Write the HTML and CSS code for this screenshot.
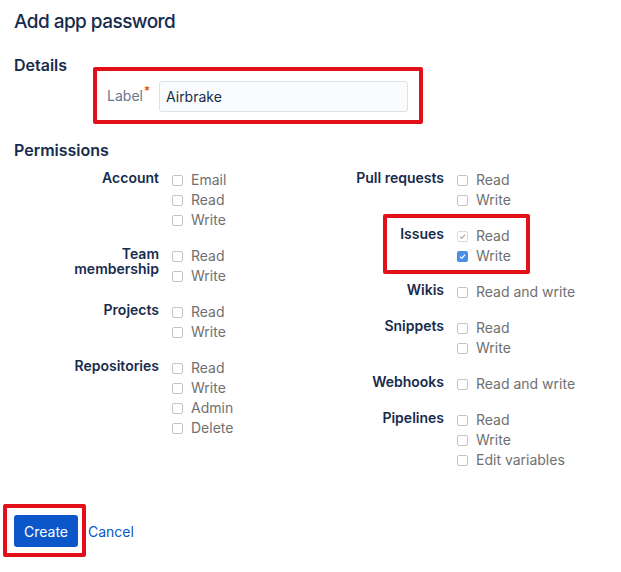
FILE: index.html
```html
<!DOCTYPE html>
<html>
<head>
<meta charset="utf-8">
<link rel="stylesheet" href="styles.css">
</head>
<body>
<div class="page">
  <h1 class="title">Add app password</h1>

  <h2 class="section-title details-title">Details</h2>
  <div class="field-row highlight-details">
    <label class="field-label" for="label-input">Label<span class="req">*</span></label>
    <input id="label-input" class="text-input" type="text" value="Airbrake">
  </div>

  <h2 class="section-title perm-title">Permissions</h2>
  <div class="perm-grid">
    <div class="perm-col">
      <div class="group">
        <div class="group-label"><span class="group-name">Account</span></div>
        <div class="options">
          <div class="opt"><span class="cb"></span>Email</div>
          <div class="opt"><span class="cb"></span>Read</div>
          <div class="opt"><span class="cb"></span>Write</div>
        </div>
      </div>
      <div class="group">
        <div class="group-label"><span class="group-name">Team membership</span></div>
        <div class="options">
          <div class="opt"><span class="cb"></span>Read</div>
          <div class="opt"><span class="cb"></span>Write</div>
        </div>
      </div>
      <div class="group">
        <div class="group-label"><span class="group-name">Projects</span></div>
        <div class="options">
          <div class="opt"><span class="cb"></span>Read</div>
          <div class="opt"><span class="cb"></span>Write</div>
        </div>
      </div>
      <div class="group">
        <div class="group-label"><span class="group-name">Repositories</span></div>
        <div class="options">
          <div class="opt"><span class="cb"></span>Read</div>
          <div class="opt"><span class="cb"></span>Write</div>
          <div class="opt"><span class="cb"></span>Admin</div>
          <div class="opt"><span class="cb"></span>Delete</div>
        </div>
      </div>
    </div>
    <div class="perm-col">
      <div class="group">
        <div class="group-label"><span class="group-name">Pull requests</span></div>
        <div class="options">
          <div class="opt"><span class="cb"></span>Read</div>
          <div class="opt"><span class="cb"></span>Write</div>
        </div>
      </div>
      <div class="group highlight-issues">
        <div class="group-label"><span class="group-name">Issues</span></div>
        <div class="options">
          <div class="opt"><span class="cb cb-disabled"><svg viewBox="0 0 11 11" width="11" height="11"><path d="M3 5.6 L4.8 7.4 L8 3.6" fill="none" stroke="#a8a8a8" stroke-width="1.1"/></svg></span>Read</div>
          <div class="opt"><span class="cb cb-checked"><svg viewBox="0 0 11 11" width="11" height="11"><path d="M3 5.6 L4.8 7.4 L8 3.6" fill="none" stroke="#ffffff" stroke-width="1.3"/></svg></span>Write</div>
        </div>
      </div>
      <div class="group">
        <div class="group-label"><span class="group-name">Wikis</span></div>
        <div class="options">
          <div class="opt"><span class="cb"></span>Read and write</div>
        </div>
      </div>
      <div class="group">
        <div class="group-label"><span class="group-name">Snippets</span></div>
        <div class="options">
          <div class="opt"><span class="cb"></span>Read</div>
          <div class="opt"><span class="cb"></span>Write</div>
        </div>
      </div>
      <div class="group">
        <div class="group-label"><span class="group-name">Webhooks</span></div>
        <div class="options">
          <div class="opt"><span class="cb"></span>Read and write</div>
        </div>
      </div>
      <div class="group">
        <div class="group-label"><span class="group-name">Pipelines</span></div>
        <div class="options">
          <div class="opt"><span class="cb"></span>Read</div>
          <div class="opt"><span class="cb"></span>Write</div>
          <div class="opt"><span class="cb"></span>Edit variables</div>
        </div>
      </div>
    </div>
  </div>

  <div class="actions">
    <span class="btn-wrap highlight-create"><button class="btn-primary" type="button">Create</button></span>
    <a class="link-cancel" href="#">Cancel</a>
  </div>
</div>
</body>
</html>
```

FILE: styles.css
```css
html, body {
  margin: 0;
  padding: 0;
  background: #ffffff;
}
body {
  font-family: "Inter", "Noto Sans", "Liberation Sans", sans-serif;
  color: #172b4d;
  -webkit-font-smoothing: antialiased;
}
.page {
  padding: 10px 14px 20px 14px;
}
.title {
  margin: 0;
  font-size: 19px;
  line-height: 24px;
  font-weight: 500;
  letter-spacing: -0.55px;
  color: #172b4d;
}
.section-title {
  margin: 0;
  font-size: 16px;
  line-height: 20px;
  font-weight: 600;
  color: #172b4d;
}
.details-title {
  margin-top: 21px;
}
.field-row {
  position: relative;
  display: flex;
  align-items: center;
  margin-top: 6px;
}
.field-label {
  width: 136px;
  padding-right: 9px;
  text-align: right;
  font-size: 14px;
  color: #6b778c;
  line-height: 20px;
}
.req {
  color: #de350b;
  font-size: 12px;
  position: relative;
  top: -6px;
  margin-left: 1px;
}
.text-input {
  box-sizing: border-box;
  width: 249px;
  height: 31px;
  border: 1px solid #dfe1e6;
  border-radius: 3px;
  background: #fafbfc;
  padding: 0 6px;
  font-family: inherit;
  font-size: 14px;
  color: #172b4d;
  outline: none;
}
.highlight-details::after,
.highlight-issues::after,
.highlight-create::after {
  content: "";
  position: absolute;
  border: 4px solid #e3101a;
  border-radius: 2px;
  pointer-events: none;
}
.highlight-details::after {
  left: 79px;
  top: -14px;
  width: 322px;
  height: 49px;
}
.perm-title {
  margin-top: 28px;
}
.perm-grid {
  display: grid;
  grid-template-columns: 285px 1fr;
  margin-top: 9px;
}
.perm-col {
  display: flex;
  flex-direction: column;
  gap: 16px;
}
.group {
  position: relative;
  display: flex;
  align-items: flex-start;
}
.group-label {
  width: 145px;
  flex: none;
  display: flex;
  justify-content: flex-end;
  text-align: right;
  font-size: 14px;
  line-height: 15px;
  font-weight: 600;
  padding-top: 1px;
  color: #172b4d;
}
.group-name {
  max-width: 96px;
}
.options {
  margin-left: 13px;
  display: flex;
  flex-direction: column;
}
.opt {
  display: flex;
  align-items: center;
  height: 20px;
  font-size: 14px;
  color: #707070;
}
.cb {
  box-sizing: border-box;
  width: 11px;
  height: 11px;
  border: 1px solid #c4c4c4;
  border-radius: 2px;
  background: #ffffff;
  margin-right: 8px;
  margin-top: 2px;
  display: flex;
  align-items: center;
  justify-content: center;
  overflow: hidden;
}
.cb svg {
  display: block;
  flex: none;
}
.cb-disabled {
  border-color: #dcdcdc;
}
.cb-checked {
  border: none;
  background: #4a8fe7;
}
.highlight-issues::after {
  left: 84px;
  top: -11px;
  width: 139px;
  height: 52px;
}
.actions {
  display: flex;
  align-items: center;
  margin-top: 46px;
}
.btn-wrap {
  position: relative;
  display: flex;
}
.btn-primary {
  height: 32px;
  width: 64px;
  padding: 0;
  border: none;
  border-radius: 3px;
  background: #0b57c9;
  color: #ffffff;
  font-family: inherit;
  font-size: 14px;
  cursor: pointer;
}
.highlight-create::after {
  left: -11px;
  top: -11px;
  width: 75px;
  height: 45px;
}
.link-cancel {
  margin-left: 10px;
  font-size: 14px;
  color: #0b57c9;
  text-decoration: none;
}
```
